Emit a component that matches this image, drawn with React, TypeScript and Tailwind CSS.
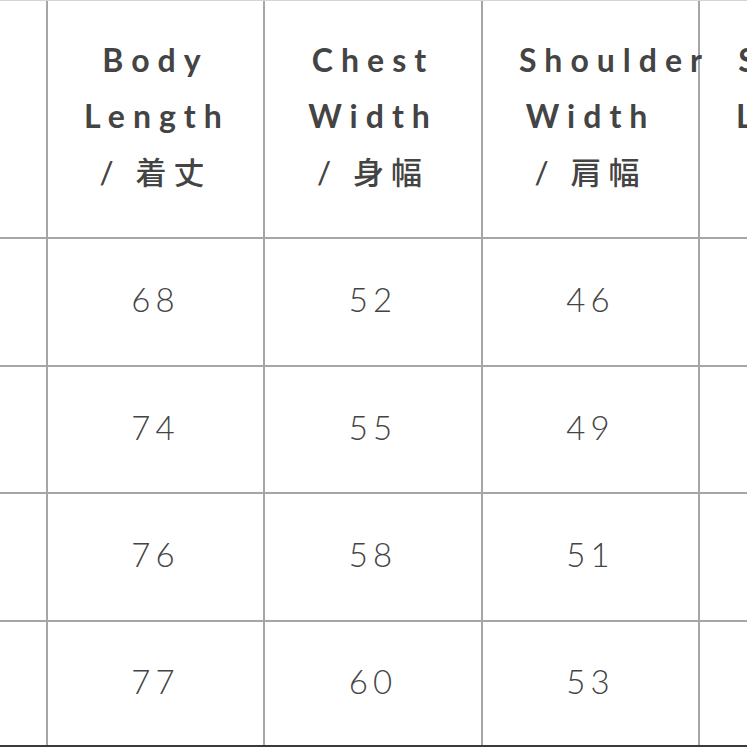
import React from "react";

const headers: { en: string[]; ja: string }[] = [
  { en: ["Body", "Length"], ja: "着丈" },
  { en: ["Chest", "Width"], ja: "身幅" },
  { en: ["Shoulder", "Width"], ja: "肩幅" },
  { en: ["Sleeve", "Length"], ja: "袖丈" },
];

const rows: string[][] = [
  ["68", "52", "46", "60"],
  ["74", "55", "49", "62"],
  ["76", "58", "51", "63"],
  ["77", "60", "53", "64"],
];

const widths = ["w-[217px]", "w-[218px]", "w-[217px]", "w-[217px]"];
const rowHeights = ["h-[128px]", "h-[127px]", "h-[128px]", "h-[125px]"];

export default function App() {
  return (
    <div className="w-[747px] h-[747px] overflow-hidden bg-white border-t border-[#d4d4d4]">
      <div className="flex h-[238px] border-b-2 border-[#a6a6a6]">
        <div className="w-[48px] shrink-0 border-r-2 border-[#a6a6a6]" />
        {headers.map((h, i) => (
          <div
            key={i}
            className={`${widths[i]} shrink-0 ${i < 3 ? "border-r-2 border-[#a6a6a6]" : ""} flex items-center px-[36px] pb-[6px]`}
          >
            <div
              className="w-full text-center text-[32px] leading-[56px] font-bold tracking-[8px] text-[#444444]"
              style={{ fontFamily: "Lato, 'Noto Sans CJK JP', sans-serif" }}
            >
              {h.en.map((w, j) => (
                <div key={j} className="whitespace-nowrap">
                  {w}
                </div>
              ))}
              <div className="whitespace-nowrap text-[31px] font-medium tracking-[7px]">
                / {h.ja}
              </div>
            </div>
          </div>
        ))}
      </div>
      {rows.map((r, ri) => (
        <div
          key={ri}
          className={`flex ${rowHeights[ri]} ${ri < 3 ? "border-b-2 border-[#a6a6a6]" : "border-b-2 border-[#3a3a3a]"}`}
        >
          <div className="w-[48px] shrink-0 border-r-2 border-[#a6a6a6]" />
          {r.map((v, ci) => (
            <div
              key={ci}
              className={`${widths[ci]} shrink-0 ${ci < 3 ? "border-r-2 border-[#a6a6a6]" : ""} flex items-center justify-center pb-[4px]`}
            >
              <span
                className="text-[33px] font-light tracking-[5px] text-[#444444]"
                style={{ fontFamily: "Lato, sans-serif" }}
              >
                {v}
              </span>
            </div>
          ))}
        </div>
      ))}
    </div>
  );
}
